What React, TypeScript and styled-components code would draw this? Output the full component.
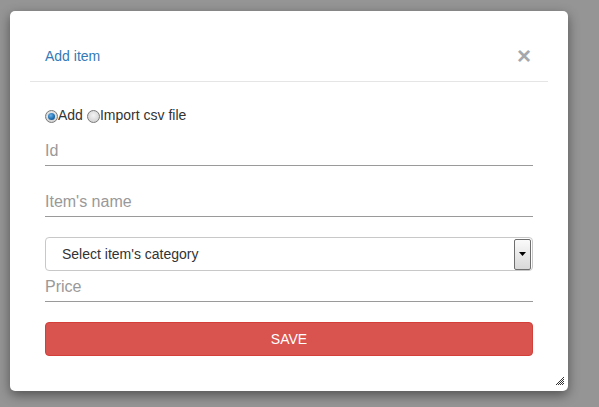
import React from "react";
import styled, { createGlobalStyle } from "styled-components";

const Global = createGlobalStyle`
  html, body { margin: 0; padding: 0; }
  body {
    background: #959595;
    font-family: "Liberation Sans", Arial, sans-serif;
    width: 599px;
    height: 407px;
    overflow: hidden;
  }
`;

const Modal = styled.div`
  position: relative;
  margin: 11px 0 0 10px;
  width: 558px;
  height: 380px;
  background: #fff;
  border-radius: 5px;
  box-shadow: 0 4px 12px rgba(0, 0, 0, 0.45);
  display: flex;
  flex-direction: column;
  box-sizing: border-box;
`;

const Header = styled.div`
  box-sizing: border-box;
  margin: 0 20px;
  height: 71px;
  border-bottom: 1px solid #e5e5e5;
  display: flex;
  align-items: center;
  justify-content: space-between;
  padding: 20px 17px 0 15px;
`;

const Title = styled.div`
  color: #337ab7;
  font-size: 14px;
`;

const Close = styled.span`
  color: #a4a8ad;
  font-size: 24px;
  font-weight: bold;
  line-height: 1;
  cursor: pointer;
`;

const Body = styled.div`
  padding: 23px 35px 35px;
  display: flex;
  flex-direction: column;
`;

const RadioRow = styled.div`
  display: flex;
  align-items: center;
  height: 20px;
  font-size: 14px;
  color: #333;
  margin-bottom: 10px;
`;

const Radio = styled.input`
  appearance: none;
  margin: 3px 0 0 0;
  width: 13px;
  height: 13px;
  box-sizing: border-box;
  border-radius: 50%;
  border: 1px solid #7a7a7a;
  background: radial-gradient(circle at 50% 40%, #f4f4f4 0%, #d6d6d6 70%, #c4c4c4 100%);
  position: relative;
  &:checked::after {
    content: "";
    position: absolute;
    left: 2px;
    top: 2px;
    width: 7px;
    height: 7px;
    border-radius: 50%;
    background: radial-gradient(circle at 40% 35%, #6db3e8 0%, #1f6fb2 55%, #0d3f6e 100%);
  }
`;

const RadioLabel = styled.label`
  margin-right: 4px;
`;

const LineInput = styled.input<{ $mt?: number }>`
  margin-top: ${(p) => p.$mt ?? 0}px;
  height: 31px;
  box-sizing: border-box;
  border: none;
  border-bottom: 1px solid #9a9a9a;
  padding: 2px 0 0 0;
  font-family: "Liberation Sans", Arial, sans-serif;
  font-size: 16px;
  color: #333;
  outline: none;
  &::placeholder { color: #999; }
`;

const SelectBox = styled.div`
  margin-top: 20px;
  height: 34px;
  box-sizing: border-box;
  border: 1px solid #c8c8c8;
  border-radius: 4px;
  display: flex;
  align-items: center;
  justify-content: space-between;
  padding-left: 16px;
  font-size: 14px;
  color: #333;
`;

const ArrowButton = styled.div`
  width: 15px;
  height: 29px;
  margin-right: 1px;
  border: 1px solid #6e6e6e;
  border-radius: 2px;
  background: linear-gradient(#fafafa, #d8d8d8);
  display: flex;
  align-items: center;
  justify-content: center;
`;

const SaveButton = styled.button`
  margin-top: 20px;
  height: 34px;
  border: 1px solid #d43f3a;
  border-radius: 4px;
  background: #d9534f;
  color: #fff;
  font-family: "Liberation Sans", Arial, sans-serif;
  font-size: 14px;
  cursor: pointer;
`;

const Grip = styled.svg`
  position: absolute;
  right: 4px;
  bottom: 6px;
`;

export default function App() {
  return (
    <>
      <Global />
      <Modal>
        <Header>
          <Title>Add item</Title>
          <Close>×</Close>
        </Header>
        <Body>
          <RadioRow>
            <Radio type="radio" name="mode" defaultChecked />
            <RadioLabel>Add</RadioLabel>
            <Radio type="radio" name="mode" />
            <RadioLabel>Import csv file</RadioLabel>
          </RadioRow>
          <LineInput placeholder="Id" />
          <LineInput $mt={20} placeholder="Item's name" />
          <SelectBox>
            <span>Select item's category</span>
            <ArrowButton>
              <svg width="7" height="5" viewBox="0 0 7 5">
                <path d="M0 0 H7 L3.5 4 Z" fill="#000" />
              </svg>
            </ArrowButton>
          </SelectBox>
          <LineInput placeholder="Price" />
          <SaveButton>SAVE</SaveButton>
        </Body>
        <Grip width="8" height="8" viewBox="0 0 8 8">
          <path d="M8 0 L0 8 M8 2 L2 8 M8 4 L4 8 M8 6 L6 8" stroke="#333" strokeWidth="1" />
        </Grip>
      </Modal>
    </>
  );
}
